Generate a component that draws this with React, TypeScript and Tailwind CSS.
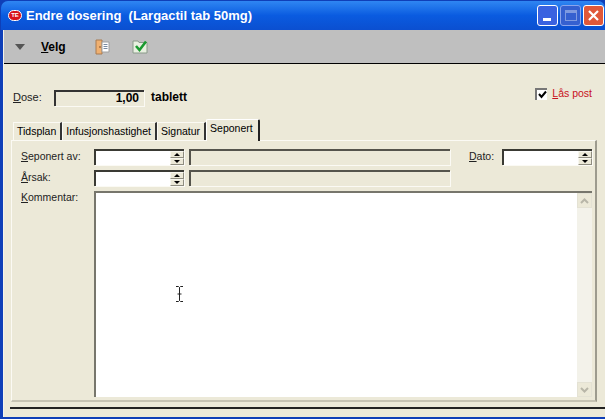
const font = { fontFamily: '"Liberation Sans", Arial, sans-serif' };

function U({ children }: { children: string }) {
  return <span className="underline underline-offset-1">{children}</span>;
}

function Spinner() {
  return (
    <div className="flex h-[14px] w-[14px] shrink-0 flex-col bg-[#ece9d8]">
      <div className="flex h-[7px] items-center justify-center border border-[#f8f7f0] border-r-[#8f8d80] border-b-[#8f8d80]">
        <div className="h-0 w-0 border-x-[3px] border-b-[3px] border-x-transparent border-b-black" />
      </div>
      <div className="flex h-[7px] items-center justify-center border border-[#f8f7f0] border-r-[#8f8d80] border-b-[#8f8d80]">
        <div className="h-0 w-0 border-x-[3px] border-t-[3px] border-x-transparent border-t-black" />
      </div>
    </div>
  );
}

function SpinField({ width }: { width: string }) {
  return (
    <div className={`flex h-[16px] shrink-0 items-stretch border-t-2 border-l-2 border-t-[#3a3a34] border-l-[#3a3a34] bg-white shadow-[1px_1px_0_#fbfaf4] ${width}`}>
      <div className="flex-1" />
      <Spinner />
    </div>
  );
}

function ReadOnlyBox() {
  return <div className="ml-[5px] h-[16px] w-[261px] shrink-0 border-t-2 border-l-2 border-t-[#55544c] border-l-[#55544c] bg-[#ece9d8] shadow-[1px_1px_0_#fbfaf4]" />;
}

function FileIcon() {
  return (
    <svg width="16" height="16" viewBox="0 0 16 16">
      <path d="M1 1h6v14H1z" fill="#f0b070" stroke="#a87a50" />
      <path d="M7 3h7v10H7z" fill="#fff" stroke="#a0a0a0" />
      <path d="M8.5 5.5h4M8.5 7.5h4M8.5 9.5h4" stroke="#7a8aa0" />
      <circle cx="5" cy="8" r="0.8" fill="#704020" />
    </svg>
  );
}

function CheckIcon() {
  return (
    <svg width="17" height="15" viewBox="0 0 17 15">
      <path d="M1 2h5l1 1.5h8V14H1z" fill="#e8f0e0" stroke="#8a9a8a" />
      <path d="M4 7l3.5 4L14 2.5" fill="none" stroke="#1a9a30" strokeWidth="2.6" />
    </svg>
  );
}

function Tab({ label, active }: { label: string; active?: boolean }) {
  if (active) {
    return (
      <div className="z-10 -mb-px flex h-[22px] items-center rounded-t-[2px] border-t border-l border-t-white border-l-white border-r-2 border-r-[#222] bg-[#ece9d8] pl-[3px] pr-[5px] pb-1 text-[10.5px] text-black">
        {label}
      </div>
    );
  }
  return (
    <div className="flex h-[18px] items-center border-t border-l border-t-[#fbfaf4] border-l-[#fbfaf4] border-r-2 border-r-[#333] pl-[3px] pr-[4px] text-[10.5px] text-black">
      {label}
    </div>
  );
}

export default function App() {
  return (
    <div className="relative h-[419px] w-[605px] overflow-hidden bg-[#0f3fb8] pt-[1px]" style={font}>
      {/* title bar */}
      <div className="ml-[1px] flex h-[29px] items-center rounded-t-[7px] bg-gradient-to-b from-[#2f86f2] via-[#0a5be0] to-[#0b4fd0] pl-[7px] pr-[1px]">
        <div className="flex h-[11px] w-[14px] items-center justify-center rounded-full border border-white bg-[#d8101c] text-[6px] font-bold text-white">TE</div>
        <div className="ml-[4px] whitespace-pre text-[13px] font-bold text-white">Endre dosering  (Largactil tab 50mg)</div>
        <div className="ml-auto flex gap-[2px]">
          <div className="flex h-[21px] w-[21px] items-end rounded-[3px] border border-white bg-[#3a62e0] pb-[4px] pl-[5px]">
            <div className="h-[3px] w-[8px] bg-white" />
          </div>
          <div className="flex h-[21px] w-[21px] items-center justify-center rounded-[3px] border border-[#8aa4ec] bg-[#3560d0]">
            <div className="h-[11px] w-[12px] border border-[#7f9ae0] border-t-[3px]" />
          </div>
          <div className="flex h-[21px] w-[21px] items-center justify-center rounded-[3px] border border-white bg-[#e0583a]">
            <svg width="13" height="13" viewBox="0 0 13 13">
              <path d="M2 2l9 9M11 2l-9 9" stroke="#fff" strokeWidth="2.2" />
            </svg>
          </div>
        </div>
      </div>

      {/* window body */}
      <div className="ml-[3px] h-[387px] border-l border-l-[#f4f3ea] bg-[#ece9d8]">
        {/* toolbar */}
        <div className="flex h-[34px] items-center border-b border-b-black bg-[#bfbfbf] pl-[11px]">
          <div className="h-0 w-0 border-x-[5px] border-t-[6px] border-x-transparent border-t-[#555]" />
          <div className="ml-[16px] text-[12px] font-bold text-black"><U>V</U>elg</div>
          <div className="ml-[29px]"><FileIcon /></div>
          <div className="ml-[21px]"><CheckIcon /></div>
        </div>

        {/* dose row */}
        <div className="flex h-[56px] items-start pt-[26px] text-[11px]">
          <div className="ml-[9px] -mt-px w-[41px] text-[#222]"><U>D</U>ose:</div>
          <div className="flex h-[16px] w-[90px] items-center justify-end border-t-2 border-l-2 border-t-[#333] border-l-[#333] bg-[#ece9d8] pb-[3px] pr-[5px] text-[12px] font-bold shadow-[1px_1px_0_#fbfaf4]">1,00</div>
          <div className="-mt-[2px] ml-[7px] text-[12px] font-bold text-black">tablett</div>
          <div className="-mt-[4px] ml-auto mr-[13px] flex items-center">
            <div className="flex h-[12px] w-[12px] items-center justify-center border-t-2 border-l-2 border-t-[#777] border-l-[#777] bg-white">
              <svg width="9" height="9" viewBox="0 0 9 9">
                <path d="M1 4l2.5 3L8 1.5" fill="none" stroke="#000" strokeWidth="2" />
              </svg>
            </div>
            <div className="ml-[5px] text-[10.5px] text-[#c8101c]"><U>L</U>ås post</div>
          </div>
        </div>

        {/* tabs */}
        <div className="ml-[7px] mr-[8px]">
          <div className="ml-[2px] flex h-[20px] items-end">
            <Tab label="Tidsplan" />
            <Tab label="Infusjonshastighet" />
            <Tab label="Signatur" />
            <Tab label="Seponert" active />
          </div>
          <div className="h-[262px] border-t border-l border-t-[#fbfaf4] border-l-[#fbfaf4] border-r-2 border-b-2 border-r-[#9d9b8e] border-b-[#c6c3b3] bg-[#ece9d8] px-[9px] pt-[8px] text-[10.5px] text-[#222]">
            <div className="flex items-center">
              <div className="w-[73px] shrink-0"><U>S</U>eponert av:</div>
              <SpinField width="w-[90px]" />
              <ReadOnlyBox />
              <div className="ml-[19px] w-[33px] shrink-0"><U>D</U>ato:</div>
              <SpinField width="w-[90px]" />
            </div>
            <div className="mt-[5px] flex items-center">
              <div className="w-[73px] shrink-0"><U>Å</U>rsak:</div>
              <SpinField width="w-[90px]" />
              <ReadOnlyBox />
            </div>
            <div className="mt-[5px] flex items-start">
              <div className="-mt-px w-[73px] shrink-0"><U>K</U>ommentar:</div>
              <div className="flex h-[206px] w-[498px] shrink-0 border-t-2 border-l-2 border-t-[#77766c] border-l-[#77766c] bg-white">
                <div className="flex-1" />
                <div className="flex w-[15px] flex-col justify-between bg-[#f3f2ea]">
                  <div className="flex h-[15px] items-center justify-center border border-[#e4e2d4] bg-[#ece9d8]">
                    <svg width="9" height="6" viewBox="0 0 9 6"><path d="M1 5l3.5-3.5L8 5" fill="none" stroke="#b8b6a8" strokeWidth="2" /></svg>
                  </div>
                  <div className="flex h-[15px] items-center justify-center border border-[#e4e2d4] bg-[#ece9d8]">
                    <svg width="9" height="6" viewBox="0 0 9 6"><path d="M1 1l3.5 3.5L8 1" fill="none" stroke="#b8b6a8" strokeWidth="2" /></svg>
                  </div>
                </div>
              </div>
            </div>
          </div>
        </div>

        {/* bottom rule */}
        <div className="ml-[6px] mt-[5px] h-[2px] bg-[#222]" />
      </div>

      {/* text cursor */}
      <svg className="absolute left-[175px] top-[286px]" width="9" height="16" viewBox="0 0 9 16">
        <path d="M1 .5h2.5L4.5 1.5 5.5.5H8M4.5 1.5v13M1 15.5h2.5l1-1 1 1H8M2.5 8h4" fill="none" stroke="#222" />
      </svg>
    </div>
  );
}
